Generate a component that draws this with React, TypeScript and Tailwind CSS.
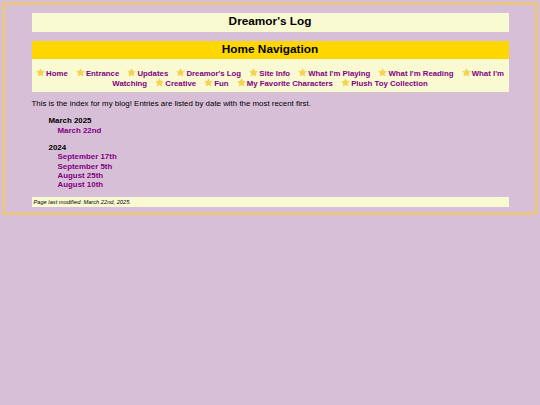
import React from "react";

function Star() {
  return (
    <svg viewBox="0 0 24 24" className="inline-block w-[9px] h-[9px] align-[-1px] mr-[1px]">
      <path
        d="M12 1.8l3.1 6.6 7.2.9-5.3 5 1.4 7.1L12 17.9l-6.4 3.5 1.4-7.1-5.3-5 7.2-.9z"
        fill="#f7d348"
        stroke="#efc23a"
        strokeWidth="1"
        strokeLinejoin="round"
      />
    </svg>
  );
}

const links: [string, boolean][] = [
  ["Home", true],
  ["Entrance", true],
  ["Updates", true],
  ["Dreamor's Log", true],
  ["Site Info", true],
  ["What I'm Playing", true],
  ["What I'm Reading", true],
  ["What I'm", true],
  ["Watching", false],
  ["Creative", true],
  ["Fun", true],
  ["My Favorite Characters", true],
  ["Plush Toy Collection", true],
];

export default function App() {
  return (
    <div
      className="min-h-[405px] bg-[#d8bfd8] pt-[2px] px-[2px] text-black"
      style={{ fontFamily: '"Liberation Sans", Arial, sans-serif' }}
    >
      <div className="border-[3px] border-[#ecc684] pt-[7.5px] pb-[5px]">
        <div className="w-[90%] mx-auto">
          <div className="bg-[#fafad2] h-[19px] flex items-center justify-center text-[11.8px] font-bold">
            Dreamor's Log
          </div>
          <div className="mt-[9.5px] bg-[#ffd700] h-[17.5px] flex items-center justify-center text-[11.8px] font-bold">
            Home Navigation
          </div>
          <div className="bg-[#fafad2] pt-[9.5px] pb-[3px] px-[4px] text-center text-[7.8px] leading-[9.4px] font-bold text-[#800080]">
            {links.map(([l, star], i) => (
              <React.Fragment key={l}>
                <span
                  className={
                    (l === "What I'm" ? "" : "whitespace-nowrap ") +
                    (i < links.length - 1 && l !== "What I'm" ? "mr-[6px]" : "")
                  }
                >
                  {star && <Star />}
                  {l}
                </span>{" "}
              </React.Fragment>
            ))}
          </div>
          <p className="mt-[7.5px] text-[7.9px] leading-[9.4px]">
            This is the index for my blog! Entries are listed by date with the most recent first.
          </p>
          <div className="mt-[7.6px] ml-[17px] text-[7.9px] leading-[9.4px] font-bold">
            <div>March 2025</div>
            <div className="ml-[9px] text-[#800080]">March 22nd</div>
            <div className="mt-[7.7px]">2024</div>
            <div className="ml-[9px] text-[#800080]">September 17th</div>
            <div className="ml-[9px] text-[#800080]">September 5th</div>
            <div className="ml-[9px] text-[#800080]">August 25th</div>
            <div className="ml-[9px] text-[#800080]">August 10th</div>
          </div>
          <div className="mt-[7.5px] bg-[#fafad2] h-[10px] flex items-center pl-[2px] text-[5.7px] italic">
            Page last modified: March 22nd, 2025.
          </div>
        </div>
      </div>
    </div>
  );
}
